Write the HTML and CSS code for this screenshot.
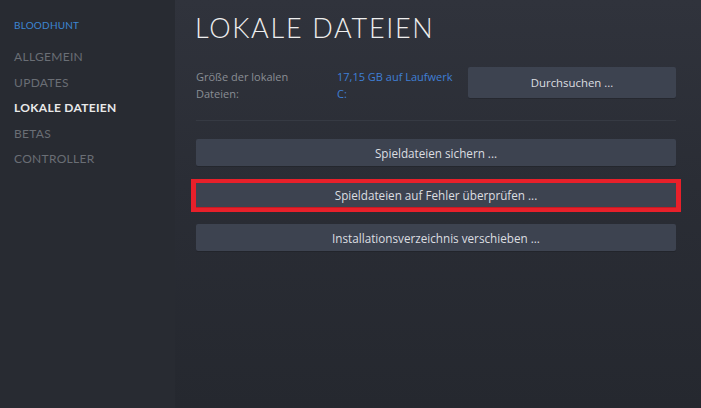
FILE: index.html
```html
<!DOCTYPE html>
<html lang="de">
<head>
<meta charset="utf-8">
<title>Lokale Dateien</title>
<link rel="stylesheet" href="styles.css">
</head>
<body>
<div class="app">
  <nav class="sidebar">
    <div class="game">BLOODHUNT</div>
    <ul class="menu">
      <li>ALLGEMEIN</li>
      <li>UPDATES</li>
      <li class="active">LOKALE DATEIEN</li>
      <li>BETAS</li>
      <li>CONTROLLER</li>
    </ul>
  </nav>
  <main class="content">
    <h1 class="title">LOKALE DATEIEN</h1>
    <div class="info">
      <div class="label">Größe der lokalen Dateien:</div>
      <div class="value">17,15 GB auf Laufwerk C:</div>
      <button class="btn browse">Durchsuchen ...</button>
    </div>
    <div class="sep"></div>
    <div class="actions">
      <button class="btn">Spieldateien sichern ...</button>
      <div class="highlight"><button class="btn">Spieldateien auf Fehler überprüfen ...</button></div>
      <button class="btn">Installationsverzeichnis verschieben ...</button>
    </div>
  </main>
</div>
</body>
</html>
```

FILE: styles.css
```css
html, body {
  margin: 0;
  padding: 0;
  height: 100%;
}
body {
  font-family: Lato, "Open Sans", sans-serif;
  background: #25282f;
  overflow: hidden;
}
.app {
  display: flex;
  width: 701px;
  height: 408px;
}
.sidebar {
  width: 175px;
  flex: none;
  background: #282b32;
  padding: 19px 0 0 14px;
  box-sizing: border-box;
}
.game {
  color: #3d86d3;
  font-size: 10px;
  line-height: 12px;
  letter-spacing: 0.2px;
}
.menu {
  list-style: none;
  margin: 19px 0 0;
  padding: 0;
}
.menu li {
  color: #6a6e75;
  font-size: 12px;
  line-height: 14px;
  height: 25.5px;
  letter-spacing: 0.3px;
}
.menu li.active {
  color: #e8e9ea;
  font-weight: 700;
}
.content {
  flex: 1;
  padding: 0 25px 0 21px;
  background: linear-gradient(180deg, #30333c 0%, #2a2d35 45%, #25282f 100%);
}
.title {
  margin: 13px 0 0 -1px;
  font-weight: 300;
  font-size: 27px;
  line-height: 30px;
  letter-spacing: 1.7px;
  color: #eeeeee;
}
.info {
  display: grid;
  grid-template-columns: 141px 131px 1fr;
  align-items: start;
  margin-top: 25px;
  font-family: "Open Sans", Lato, sans-serif;
}
.label {
  color: #8a8e94;
  font-size: 11px;
  line-height: 17px;
  width: 112px;
}
.value {
  color: #3f7fd6;
  font-size: 11px;
  line-height: 17px;
  width: 128px;
}
.btn {
  display: block;
  width: 100%;
  border: none;
  background: #3d4350;
  color: #dcdee1;
  font-family: "Open Sans", Lato, sans-serif;
  font-size: 11.7px;
  height: 27px;
  padding: 0;
  border-radius: 2px;
  box-shadow: 0 1px 0 rgba(0,0,0,0.15);
}
.browse {
  height: 31px;
  margin-top: -1px;
  font-size: 11.4px;
}
.sep {
  height: 1px;
  background: #363a43;
  margin-top: 18px;
}
.actions {
  display: flex;
  flex-direction: column;
  gap: 17px;
  margin-top: 18px;
}
.highlight {
  margin: -4px -5px -5px -5px;
  border-style: solid;
  border-color: #e8202a;
  border-width: 4px 4px 5px 5px;
  padding: 0 1px 0 0;
  background: #e8202a;
}
.highlight .btn {
  height: 24px;
  border-radius: 0;
}
```
